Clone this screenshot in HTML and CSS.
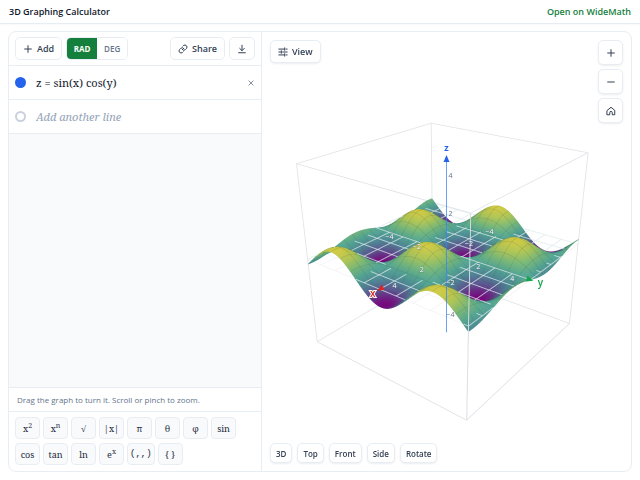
FILE: index.html
```html
<!DOCTYPE html>
<html lang="en">
<head>
<meta charset="utf-8">
<meta name="viewport" content="width=device-width, initial-scale=1">
<title>3D Graphing Calculator</title>
<link rel="stylesheet" href="styles.css">
</head>
<body>
<header class="topbar">
  <h1 class="title">3D Graphing Calculator</h1>
  <a class="open-link" href="#">Open on WideMath</a>
</header>
<main class="card">
  <section class="side" aria-label="Expressions">
    <div class="toolbar">
      <button class="btn" type="button"><svg class="icon" viewBox="0 0 24 24"><path d="M12 4v16M4 12h16"/></svg>Add</button>
      <div class="segment">
        <button class="seg seg-on" type="button">RAD</button>
        <button class="seg" type="button">DEG</button>
      </div>
      <button class="btn share" type="button"><svg class="icon" viewBox="0 0 24 24"><path d="M10 13a5 5 0 0 0 7.5.5l3-3a5 5 0 0 0-7-7l-1.700 1.700"/><path d="M14 11a5 5 0 0 0-7.500-.5l-3 3a5 5 0 0 0 7 7l1.700-1.700"/></svg>Share</button>
      <button class="btn" type="button" aria-label="Download"><svg class="icon" viewBox="0 0 24 24"><path d="M12 3v13M6.500 10.500 12 16l5.500-5.500M4 21h16"/></svg></button>
    </div>
    <div class="row">
      <button class="dot dot-on" type="button" aria-label="Toggle surface"></button>
      <input class="expr" type="text" value="z = sin(x) cos(y)" aria-label="Expression 1">
      <button class="remove" type="button" aria-label="Remove"><svg class="icon-x" viewBox="0 0 10 10"><path d="M2 2l6 6M8 2 2 8"/></svg></button>
    </div>
    <div class="row">
      <span class="dot"></span>
      <input class="expr" type="text" placeholder="Add another line" aria-label="Expression 2">
    </div>
    <div class="space"></div>
    <p class="hint">Drag the graph to turn it. Scroll or pinch to zoom.</p>
    <div class="keys">
      <button class="key" type="button">x<sup>2</sup></button>
      <button class="key" type="button">x<sup>n</sup></button>
      <button class="key" type="button">√</button>
      <button class="key" type="button">|x|</button>
      <button class="key" type="button">π</button>
      <button class="key" type="button">θ</button>
      <button class="key" type="button">φ</button>
      <button class="key" type="button">sin</button>
      <button class="key" type="button">cos</button>
      <button class="key" type="button">tan</button>
      <button class="key" type="button">ln</button>
      <button class="key" type="button">e<sup>x</sup></button>
      <button class="key mono" type="button">(,,)</button>
      <button class="key" type="button">{ }</button>
    </div>
  </section>
  <section class="stage" aria-label="Graph">
    <canvas class="surface"></canvas>
    <svg class="overlay" xmlns="http://www.w3.org/2000/svg"></svg>
    <button class="btn view" type="button"><svg class="icon" viewBox="0 0 24 24"><path d="M2 5h12M19 5h3M2 12h4M11 12h11M2 19h12M19 19h3M16 2v6M8 9v6M16 16v6"/></svg>View</button>
    <div class="zoom">
      <button class="tool" type="button" aria-label="Zoom in"><svg class="icon" viewBox="0 0 24 24"><path d="M12 4v16M4 12h16"/></svg></button>
      <button class="tool" type="button" aria-label="Zoom out"><svg class="icon" viewBox="0 0 24 24"><path d="M4 12h16"/></svg></button>
      <button class="tool" type="button" aria-label="Reset view"><svg class="icon" viewBox="0 0 24 24"><path d="M3 10.500 12 3l9 7.500V21h-6v-5a3 3 0 0 0-6 0v5H3z"/></svg></button>
    </div>
    <div class="views">
      <button class="chip" type="button">3D</button>
      <button class="chip" type="button">Top</button>
      <button class="chip" type="button">Front</button>
      <button class="chip" type="button">Side</button>
      <button class="chip" type="button">Rotate</button>
    </div>
  </section>
</main>
<script src="graph.js"></script>
</body>
</html>
```
FILE: styles.css
```css
* { box-sizing: border-box; }
body {
  margin: 0;
  min-height: 100vh;
  display: flex;
  flex-direction: column;
  background: #fff;
  color: #334155;
  font-family: "Open Sans", sans-serif;
  font-size: 9px;
}
button, input { font: inherit; color: inherit; margin: 0; }
button { cursor: pointer; }
.topbar {
  display: flex;
  align-items: center;
  justify-content: space-between;
  height: 24px;
  padding: 0 9px;
  border-bottom: 1px solid #e8edf3;
  box-shadow: 0 1px 2px #0f172a08;
}
.title { margin: 0; font-size: 9px; font-weight: 600; color: #0f172a; }
.open-link { color: #15803d; font-weight: 600; text-decoration: none; }
.card {
  flex: 1;
  display: grid;
  grid-template-columns: 253px 1fr;
  margin: 7px 8px 8px;
  border: 1px solid #e8edf3;
  border-radius: 8px;
  overflow: hidden;
}
.side { display: flex; flex-direction: column; border-right: 1px solid #e8edf3; }
.toolbar {
  display: flex;
  align-items: center;
  gap: 4px;
  height: 34px;
  padding: 0 6px;
  border-bottom: 1px solid #e8edf3;
}
.btn {
  display: flex;
  align-items: center;
  gap: 4px;
  height: 23px;
  padding: 0 7px;
  border: 1px solid #e8edf3;
  border-radius: 5px;
  background: #fff;
  font-weight: 600;
}
.icon {
  width: 10px;
  height: 10px;
  fill: none;
  stroke: currentColor;
  stroke-width: 2.4;
  stroke-linecap: round;
  stroke-linejoin: round;
}
.segment {
  display: flex;
  height: 23px;
  border: 1px solid #e8edf3;
  border-radius: 5px;
  overflow: hidden;
}
.seg { width: 30px; padding: 0; border: 0; background: #fff; color: #64748b; font-size: 8px; font-weight: 600; }
.seg-on { background: #15803d; color: #fff; font-weight: 700; }
.share { margin-left: auto; }
.row {
  display: flex;
  align-items: center;
  height: 34px;
  padding: 0 6px;
  border-bottom: 1px solid #e8edf3;
}
.dot { width: 11px; height: 11px; padding: 0; border: 2px solid #cbd0de; border-radius: 50%; background: #fff; }
.dot-on { border-color: #2563eb; background: #2563eb; }
.expr {
  flex: 1;
  min-width: 0;
  padding: 0;
  margin-left: 10px;
  border: 0;
  outline: 0;
  background: none;
  color: #0f172a;
  font-family: "Noto Serif", "Liberation Serif", serif;
  font-size: 11px;
}
.expr::placeholder { color: #94a3b8; font-style: italic; opacity: 1; }
.remove { display: flex; padding: 0; border: 0; background: none; color: #64748b; }
.icon-x { width: 8px; height: 8px; fill: none; stroke: currentColor; }
.space { flex: 1; background: #f8fafc; }
.hint {
  margin: 0;
  padding: 0 8px;
  border-top: 1px solid #e8edf3;
  color: #64748b;
  font-size: 8px;
  line-height: 23px;
}
.keys {
  display: flex;
  flex-wrap: wrap;
  gap: 4px 3px;
  padding: 5px 6px 6px;
  border-top: 1px solid #e8edf3;
}
.key {
  min-width: 25px;
  height: 22px;
  padding: 0;
  border: 1px solid #e8edf3;
  border-radius: 4px;
  background: #f8fafc;
  color: #1e293b;
  font-family: "Noto Serif", "Liberation Serif", serif;
  font-size: 9px;
}
.key sup { font-size: 7px; line-height: 0; }
.mono { padding: 0 2px; font-family: "Liberation Mono", monospace; font-size: 9px; }
.stage { position: relative; min-width: 0; }
.surface, .overlay { position: absolute; inset: 0; width: 100%; height: 100%; }
.view { position: absolute; left: 8px; top: 8px; }
.view, .tool, .chip { box-shadow: 0 1px 2px #0f172a14; }
.zoom { position: absolute; top: 8px; right: 8px; display: grid; gap: 4px; }
.tool {
  display: grid;
  place-items: center;
  width: 25px;
  height: 25px;
  padding: 0;
  border: 1px solid #e8edf3;
  border-radius: 5px;
  background: #fff;
}
.views { position: absolute; left: 8px; bottom: 8px; display: flex; gap: 5px; }
.chip {
  height: 20px;
  padding: 0 5px;
  border: 1px solid #e8edf3;
  border-radius: 5px;
  background: #fff;
  font-size: 8px;
  font-weight: 600;
}
.zline { stroke: #3b82f6; stroke-opacity: .75; stroke-width: 1; }
.tick { font-size: 7px; fill: #64748b; text-anchor: middle; }
.tick-on { font-size: 7px; fill: #f8fafc; stroke: #64748b; stroke-opacity: .45; stroke-width: 1; paint-order: stroke; text-anchor: middle; }
.name { font-size: 10px; font-weight: 600; text-anchor: middle; stroke: #fff; stroke-width: 2; paint-order: stroke; }
.name-z { font-size: 9px; font-weight: 700; }
.red { fill: #dc2626; }
.green { fill: #16a34a; }
.blue { fill: #2563eb; }
```
FILE: graph.js
```js
const stage = document.querySelector('.stage');
const canvas = document.querySelector('.surface');
const overlay = document.querySelector('.overlay');

const azimuth = 37.65 * Math.PI / 180;
const elevation = 25.9 * Math.PI / 180;
const distance = 30.25;
const ca = Math.cos(azimuth), sa = Math.sin(azimuth);
const ce = Math.cos(elevation), se = Math.sin(elevation);
const eye = [distance * ca * ce, distance * sa * ce, distance * se];
const f = (x, y) => Math.sin(x) * Math.cos(y);

const stops = [[118, 4, 124], [92, 84, 144], [78, 136, 150], [84, 166, 148], [122, 186, 122], [174, 198, 88], [208, 202, 68]];
function ramp(t) {
  const s = Math.min(5.999, Math.max(0, t * 6)), i = Math.floor(s), k = s - i;
  return stops[i].map((v, j) => v + (stops[i + 1][j] - v) * k);
}

function hidden(p) {
  const dir = eye.map((v, i) => v - p[i]);
  const len = Math.hypot(...dir);
  let first = 0;
  for (let t = 0.08; t < 14; t += 0.06) {
    const x = p[0] + dir[0] / len * t, y = p[1] + dir[1] / len * t, z = p[2] + dir[2] / len * t;
    if (Math.abs(x) > 5 || Math.abs(y) > 5 || z > 1.01) return false;
    const s = Math.sign(z - f(x, y));
    if (!first) first = s;
    else if (s !== first) return true;
  }
  return false;
}

function draw() {
  const w = stage.clientWidth, h = stage.clientHeight;
  const focal = 583 * Math.min(w / 369, h / 438);
  const project = (x, y, z) => {
    const p = x * ca + y * sa;
    const d = distance - p * ce - z * se;
    return [w / 2 + focal * (y * ca - x * sa) / d, h / 2 - focal * (z * ce - p * se) / d, d];
  };
  const scale = 2;
  canvas.width = w * scale;
  canvas.height = h * scale;
  const c = canvas.getContext('2d');
  c.scale(scale, scale);

  const line = (a, b, color, width, test) => {
    c.strokeStyle = color;
    c.lineWidth = width;
    const n = 200;
    let open = false;
    c.beginPath();
    for (let i = 0; i <= n; i++) {
      const p = a(i / n * 10 - 5, b);
      if (test && !test(p)) { open = false; continue; }
      const q = project(...p);
      if (open) c.lineTo(q[0], q[1]); else c.moveTo(q[0], q[1]);
      open = true;
    }
    c.stroke();
  };

  // Floor grid, seen outside the surface.
  for (let k = -5; k <= 5; k++) {
    line((t, b) => [t, b, 0], k, '#f1f2f4', 0.7);
    line((t, b) => [b, t, 0], k, '#f1f2f4', 0.7);
  }
  c.strokeStyle = '#e0e2e5';
  c.lineWidth = 0.8;
  const corner = (x, y, z) => project(x * 5, y * 5, z * 5);
  const edges = [];
  for (const i of [-1, 1]) for (const j of [-1, 1]) {
    edges.push([corner(-1, i, j), corner(1, i, j)]);
    edges.push([corner(i, -1, j), corner(i, 1, j)]);
    edges.push([corner(i, j, -1), corner(i, j, 1)]);
  }
  for (const [a, b] of edges) { c.beginPath(); c.moveTo(a[0], a[1]); c.lineTo(b[0], b[1]); c.stroke(); }

  // Surface cells, far to near.
  const n = 130, cells = [];
  for (let i = 0; i < n; i++) for (let j = 0; j < n; j++) {
    const x0 = -5 + 10 * i / n, x1 = -5 + 10 * (i + 1) / n;
    const y0 = -5 + 10 * j / n, y1 = -5 + 10 * (j + 1) / n;
    const x = (x0 + x1) / 2, y = (y0 + y1) / 2;
    cells.push({
      q: [project(x0, y0, f(x0, y0)), project(x1, y0, f(x1, y0)), project(x1, y1, f(x1, y1)), project(x0, y1, f(x0, y1))],
      d: project(x, y, f(x, y))[2], x, y
    });
  }
  cells.sort((a, b) => b.d - a.d);
  for (const { q, x, y } of cells) {
    const nx = -Math.cos(x) * Math.cos(y), ny = Math.sin(x) * Math.sin(y);
    const light = 0.84 + 0.16 * (0.2 * nx + 0.2 * ny + 1) / Math.hypot(nx, ny, 1);
    const rgb = ramp((f(x, y) + 1) / 2).map(v => Math.round(v * light));
    c.fillStyle = c.strokeStyle = `rgb(${rgb})`;
    c.lineWidth = 0.5;
    c.beginPath();
    q.forEach((p, i) => i ? c.lineTo(p[0], p[1]) : c.moveTo(p[0], p[1]));
    c.closePath();
    c.fill();
    c.stroke();
  }

  // Mesh lines on the surface and the floor grid above its valleys.
  const seen = p => !hidden(p);
  for (let k = -4.375; k < 5; k += 0.625) {
    line((t, b) => [t, b, f(t, b) + 0.02], k, 'rgba(60,80,60,.2)', 0.6, seen);
    line((t, b) => [b, t, f(b, t) + 0.02], k, 'rgba(60,80,60,.2)', 0.6, seen);
  }
  const above = p => f(p[0], p[1]) < 0.01 && !hidden(p);
  for (let k = -5; k <= 5; k++) {
    line((t, b) => [t, b, 0], k, 'rgba(225,238,240,.75)', 0.9, above);
    line((t, b) => [b, t, 0], k, 'rgba(225,238,240,.75)', 0.9, above);
  }
  const a = corner(1, 1, 1), b = corner(1, 1, -1);
  c.strokeStyle = '#dddfe3';
  c.lineWidth = 0.9;
  c.beginPath(); c.moveTo(a[0], a[1]); c.lineTo(b[0], b[1]); c.stroke();

  // Axes, ticks and names.
  const top = project(0, 0, 5), low = project(0, 0, -5);
  const xe = project(5, 0, 0), ye = project(0, 5, 0);
  const text = (p, dx, dy, cls, s) => `<text class="${cls}" x="${p[0] + dx}" y="${p[1] + dy}">${s}</text>`;
  const arrow = (p, angle, cls) => `<path class="${cls}" transform="translate(${p[0]} ${p[1]}) rotate(${angle})" d="M3 0-4-3v6z"/>`;
  let out = `<path class="zline" d="M${top[0]} ${top[1]}V${low[1]}"/>`;
  out += arrow(top, -90, 'blue') + arrow(xe, 150, 'red') + arrow(ye, 18, 'green');
  for (const v of [-4, -2, 2, 4]) {
    const s = String(v).replace('-', '−');
    out += text(project(v, 0, 0), 0, 7, 'tick-on', s);
    out += text(project(0, v, 0), 0, 7, 'tick-on', s);
    out += text(project(0, 0, v), 4, 0, v === -2 ? 'tick-on' : 'tick', s);
  }
  out += text(xe, -7, 8, 'name red', 'x') + text(ye, 10, 6, 'name green', 'y') + text(top, 0, -7, 'name name-z blue', 'z');
  overlay.innerHTML = out;
}

draw();
addEventListener('resize', draw);
```
